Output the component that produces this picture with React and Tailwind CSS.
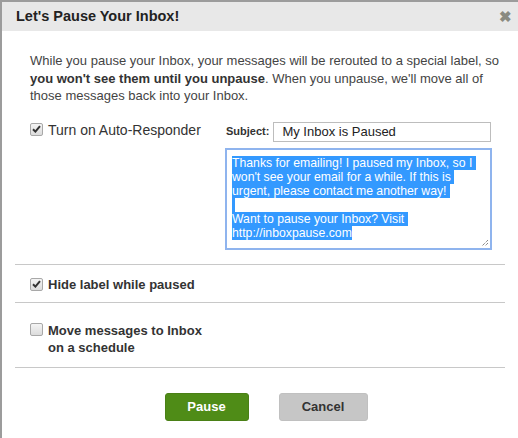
import React from "react";

const sel = "bg-[#3399ff] text-white";

const Check = ({ checked }) => (
  <span className="mt-[1px] flex h-[13px] w-[13px] shrink-0 items-center justify-center rounded-[2px] border border-[#a8a8a8] bg-gradient-to-b from-[#f4f4f4] to-[#dcdcdc]">
    {checked && (
      <svg width="9" height="8" viewBox="0 0 9 8">
        <path d="M1 4.2 L3.4 6.6 L8 1.2" fill="none" stroke="#333" strokeWidth="2" />
      </svg>
    )}
  </span>
);

export default function App() {
  return (
    <div
      className="flex h-[438px] w-[518px] flex-col border-l-2 border-t-2 border-[#9c9c9c] bg-white text-[#333]"
      style={{ fontFamily: '"Liberation Sans", Arial, sans-serif' }}
    >
      <div className="flex h-[29px] items-center justify-between bg-[#e8e8e8] pl-[14px] pr-[6px]">
        <h1 className="text-[14.5px] font-bold text-[#222]">Let's Pause Your Inbox!</h1>
        <span className="text-[15px] font-bold leading-none text-[#8a8a80]">✖</span>
      </div>

      <p className="pl-[28px] pr-[8px] pt-[21px] text-[13px] leading-[17.5px] text-[#444]">
        While you pause your Inbox, your messages will be rerouted to a special label, so{" "}
        <b className="text-[#333]">you won't see them until you unpause</b>. When you unpause, we'll move all of
        those messages back into your Inbox.
      </p>

      <div className="mx-[13px] mt-[17px] flex border-b border-[#c8c8c8] pb-[14px]">
        <label className="flex w-[210px] items-start gap-[5px] pl-[15px]">
          <Check checked />
          <span className="text-[14px] leading-[16px] text-[#333]">Turn on Auto-Responder</span>
        </label>
        <div className="flex flex-col gap-[6px]">
          <div className="flex items-center gap-[4px]">
            <span className="pl-[1px] text-[11px] font-bold text-[#333]">Subject:</span>
            <div className="flex h-[20px] w-[218px] items-center border border-[#bdbdbd] px-[8px] text-[13px] text-[#222]">
              My Inbox is Paused
            </div>
          </div>
          <div className="relative h-[102px] w-[267px] border-2 border-[#8fb4ee] px-[5px] pt-[6px] text-[12.25px] leading-[14px]">
            <div><span className={sel}>Thanks for emailing! I paused my Inbox, so I&nbsp;</span></div>
            <div><span className={sel}>won't see your email for a while. If this is&nbsp;</span></div>
            <div><span className={sel}>urgent, please contact me another way!&nbsp;</span></div>
            <div><span className={sel}>&nbsp;</span></div>
            <div><span className={sel}>Want to pause your Inbox? Visit&nbsp;</span></div>
            <div><span className={sel}>http://inboxpause.com</span></div>
            <svg className="absolute bottom-[1px] right-[1px]" width="8" height="8" viewBox="0 0 8 8">
              <path d="M7 1 L1 7 M7 4 L4 7" stroke="#555" strokeWidth="1" strokeDasharray="1 1" />
            </svg>
          </div>
        </div>
      </div>

      <label className="mx-[13px] flex items-start gap-[5px] border-b border-[#c8c8c8] pb-[9px] pl-[15px] pt-[12px]">
        <Check checked />
        <span className="text-[13px] font-bold leading-[16px]">Hide label while paused</span>
      </label>

      <label className="mx-[13px] flex items-start gap-[5px] border-b border-[#c8c8c8] pb-[11px] pl-[15px] pt-[19px]">
        <Check />
        <span className="text-[13px] font-bold leading-[17px]">
          Move messages to Inbox
          <br />
          on a schedule
        </span>
      </label>

      <div className="flex justify-center gap-[30px] pl-[12px] pt-[25px]">
        <button className="h-[28px] w-[84px] rounded-[3px] border border-[#4a8016] bg-[#4f8c17] text-[13px] font-bold text-white">
          Pause
        </button>
        <button className="h-[28px] w-[89px] rounded-[3px] border border-[#c0c0c0] bg-[#c6c6c6] text-[13px] font-bold text-[#333]">
          Cancel
        </button>
      </div>
    </div>
  );
}
